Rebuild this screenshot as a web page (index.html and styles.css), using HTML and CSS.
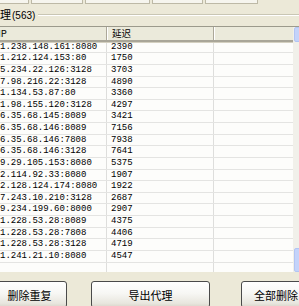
FILE: index.html
```html
<!DOCTYPE html>
<html>
<head>
<meta charset="utf-8">
<link rel="stylesheet" href="styles.css">
</head>
<body>
<div class="screen">
  <div class="tabs">
    <span class="tab w1"></span>
    <span class="tab w2"></span>
    <span class="tab w3"></span>
    <span class="tab w4"></span>
    <span class="tab w5"></span>
  </div>
  <div class="group-head">
    <span class="group-title">代理<span class="count">(563)</span></span>
    <span class="group-line"></span>
  </div>
  <div class="listview">
    <div class="table">
      <div class="row head"><div class="c c1">IP</div><div class="c c2">延迟</div><div class="c c3"></div></div>
      <div class="row"><div class="c c1">1.238.148.161:8080</div><div class="c c2">2390</div><div class="c c3"></div></div>
      <div class="row"><div class="c c1">1.212.124.153:80</div><div class="c c2">1750</div><div class="c c3"></div></div>
      <div class="row"><div class="c c1">5.234.22.126:3128</div><div class="c c2">3703</div><div class="c c3"></div></div>
      <div class="row"><div class="c c1">7.98.216.22:3128</div><div class="c c2">4890</div><div class="c c3"></div></div>
      <div class="row"><div class="c c1">1.134.53.87:80</div><div class="c c2">3360</div><div class="c c3"></div></div>
      <div class="row"><div class="c c1">1.98.155.120:3128</div><div class="c c2">4297</div><div class="c c3"></div></div>
      <div class="row"><div class="c c1">6.35.68.145:8089</div><div class="c c2">3421</div><div class="c c3"></div></div>
      <div class="row"><div class="c c1">6.35.68.146:8089</div><div class="c c2">7156</div><div class="c c3"></div></div>
      <div class="row"><div class="c c1">6.35.68.146:7808</div><div class="c c2">7938</div><div class="c c3"></div></div>
      <div class="row"><div class="c c1">6.35.68.146:3128</div><div class="c c2">7641</div><div class="c c3"></div></div>
      <div class="row"><div class="c c1">9.29.105.153:8080</div><div class="c c2">5375</div><div class="c c3"></div></div>
      <div class="row"><div class="c c1">2.114.92.33:8080</div><div class="c c2">1907</div><div class="c c3"></div></div>
      <div class="row"><div class="c c1">2.128.124.174:8080</div><div class="c c2">1922</div><div class="c c3"></div></div>
      <div class="row"><div class="c c1">7.243.10.210:3128</div><div class="c c2">2687</div><div class="c c3"></div></div>
      <div class="row"><div class="c c1">9.234.199.60:8000</div><div class="c c2">2907</div><div class="c c3"></div></div>
      <div class="row"><div class="c c1">1.228.53.28:8089</div><div class="c c2">4375</div><div class="c c3"></div></div>
      <div class="row"><div class="c c1">1.228.53.28:7808</div><div class="c c2">4406</div><div class="c c3"></div></div>
      <div class="row"><div class="c c1">1.228.53.28:3128</div><div class="c c2">4719</div><div class="c c3"></div></div>
      <div class="row"><div class="c c1">1.241.21.10:8080</div><div class="c c2">4547</div><div class="c c3"></div></div>
      <div class="row empty"><div class="c c1"></div><div class="c c2"></div><div class="c c3"></div></div>
    </div>
    <div class="scrollbar">
      <div class="sb-btn"></div>
      <div class="sb-track"></div>
      <div class="sb-btn bottom"></div>
    </div>
  </div>
  <div class="buttons">
    <button class="btn b1">删除重复</button>
    <button class="btn b2">导出代理</button>
    <button class="btn b3">全部删除</button>
  </div>
</div>
</body>
</html>
```

FILE: styles.css
```css
html, body {
  margin: 0;
  padding: 0;
}
body {
  width: 299px;
  height: 306px;
  overflow: hidden;
  background: #ECE9D8;
  font-family: "Noto Sans CJK SC", "Liberation Sans", sans-serif;
}
.screen {
  width: 310px;
}
.tabs {
  display: flex;
  gap: 2px;
  height: 4px;
  margin-left: -23px;
}
.tab {
  box-sizing: border-box;
  height: 4px;
  background: #F6F5EE;
  border: 1px solid #BDB9A6;
  border-top: none;
}
.w1 { width: 52px; }
.w2 { width: 52px; }
.w3 { width: 65px; }
.w4 { width: 51px; }
.w5 { width: 53px; }

.group-head {
  display: flex;
  align-items: center;
  height: 22px;
}
.group-title {
  margin-left: -11px;
  font-size: 11px;
  line-height: 12px;
  color: #000;
  white-space: nowrap;
}
.count {
  font-family: "Liberation Sans", sans-serif;
  font-size: 10px;
  margin-left: 1px;
}
.group-line {
  flex: 1;
  margin-left: 3px;
  height: 1px;
  background: #C9C6B4;
  border-bottom: 1px solid #FFFFFF;
}

.listview {
  display: flex;
  height: 246px;
  border-top: 1px solid #9C9A8C;
  box-sizing: border-box;
  overflow: hidden;
  background: #FDFDFB;
}
.table {
  width: 293px;
  flex: none;
}
.row {
  display: grid;
  grid-template-columns: 107px 107px 1fr;
  height: 11.63px;
  box-sizing: border-box;
  border-bottom: 1px solid #E4E4E2;
  font-family: "Liberation Mono", monospace;
  font-size: 9px;
  line-height: 10.63px;
  color: #000;
}
.row .c {
  box-sizing: border-box;
  border-right: 1px solid #DEDEDC;
  white-space: nowrap;
  overflow: hidden;
}
.row .c3 {
  border-right: none;
}
.row .c2 {
  padding-left: 4px;
}
.row.empty {
  height: 30px;
  border-bottom: none;
}
.row.head {
  height: 14.7px;
  background: #EBEADB;
  border-bottom: 2px solid #A9A698;
  box-shadow: 0 1px 0 #D4D0C0;
  font-family: "Noto Sans CJK SC", "Liberation Sans", sans-serif;
  font-size: 9.5px;
  line-height: 12.7px;
  position: relative;
  z-index: 1;
}
.row.head .c {
  border-right: 1px solid #ACA899;
  box-shadow: 1px 0 0 #FFFFFF;
}
.row.head .c1 {
  text-indent: -2px;
}
.row.head .c2 {
  padding-left: 5px;
}
.row.head .c3 {
  border-right: none;
  box-shadow: none;
}

.scrollbar {
  width: 17px;
  flex: none;
  display: flex;
  flex-direction: column;
  background: #F1F0EA;
}
.sb-btn {
  height: 15px;
  box-sizing: border-box;
  margin-left: 1px;
  background: #C4D3FA;
  border: 1px solid #B2C5F4;
  border-radius: 2px;
}
.sb-track {
  flex: 1;
}
.sb-btn.bottom {
  height: 24px;
}

.buttons {
  display: flex;
  margin-top: 9px;
  margin-left: -8px;
}
.btn {
  height: 27px;
  box-sizing: border-box;
  border: 1px solid #4A4A4A;
  border-radius: 3px;
  background: linear-gradient(#FFFFFF 0%, #F7F7F4 45%, #E8E6DE 85%, #D9D5CA 100%);
  font-family: "Noto Sans CJK SC", sans-serif;
  font-size: 11px;
  color: #000;
  padding: 0;
  flex: none;
}
.b1 { width: 75px; }
.b2 { width: 119px; margin-left: 24px; }
.b3 { width: 70px; margin-left: 31px; }
```
